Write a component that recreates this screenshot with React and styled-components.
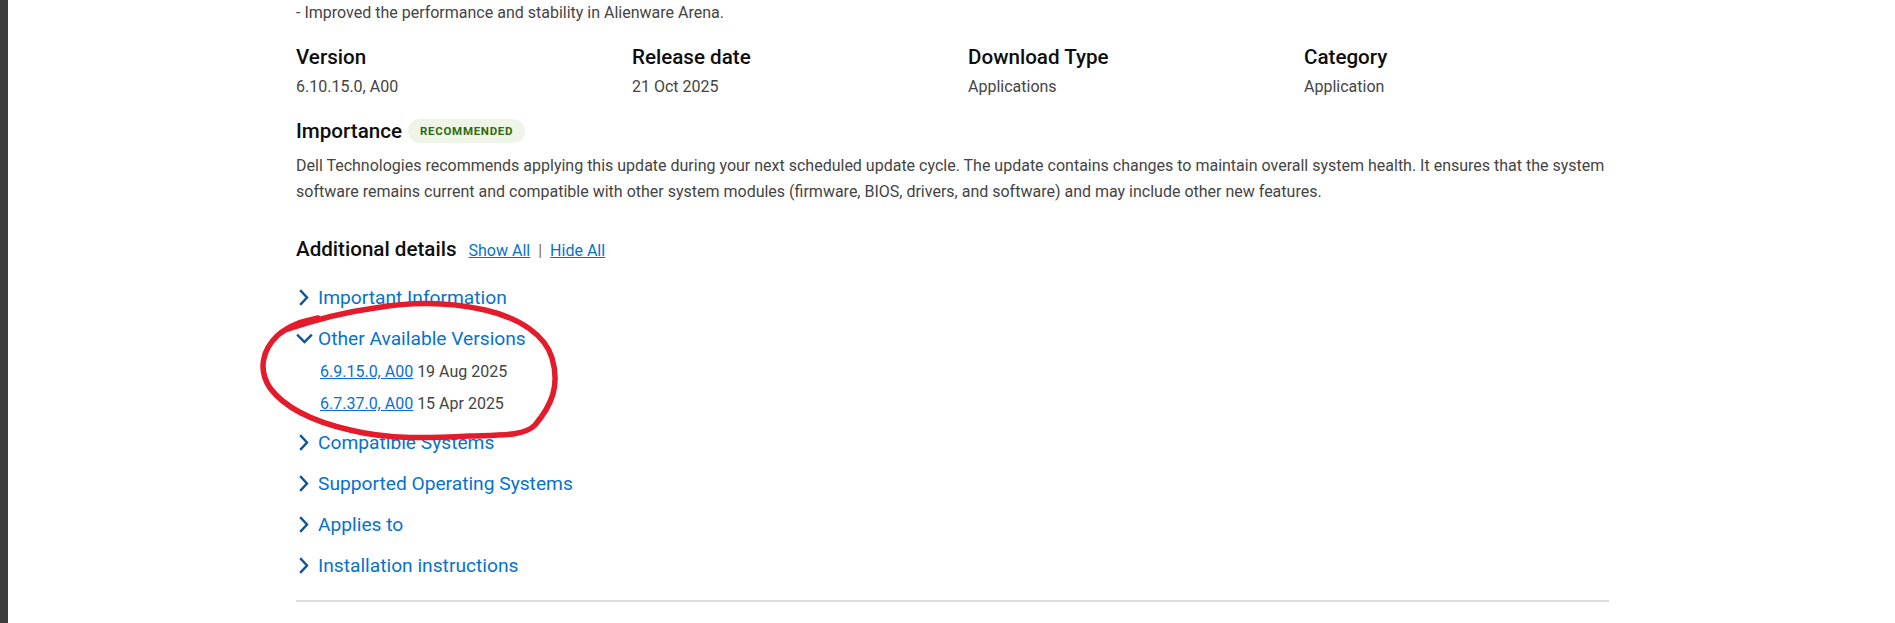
import React from "react";
import styled, { createGlobalStyle } from "styled-components";

const GlobalStyle = createGlobalStyle`
  html, body { margin: 0; padding: 0; background: #ffffff; }
  body { font-family: Roboto, "Noto Sans", "Liberation Sans", sans-serif; color: #444444; }
  * { box-sizing: border-box; }
`;

const Page = styled.div`
  display: flex;
  min-height: 100vh;
  position: relative;
  overflow: hidden;
`;

const SideBar = styled.div`
  width: 8px;
  flex: 0 0 8px;
  background: #3c3c3c;
`;

const Content = styled.main`
  margin-left: 288px;
  width: 1313px;
  padding-top: 1px;
`;

const Note = styled.p`
  margin: 0;
  font-size: 16px;
  line-height: 24px;
  color: #444444;
`;

const InfoGrid = styled.div`
  display: grid;
  grid-template-columns: repeat(4, 1fr);
  column-gap: 31px;
  margin-top: 18px;
`;

const InfoItem = styled.div`
  display: flex;
  flex-direction: column;
  gap: 4px;
`;

const Heading = styled.h3`
  margin: 0;
  font-size: 20.6px;
  line-height: 28px;
  font-weight: 500;
  color: #0e0e0e;
`;

const Value = styled.span`
  font-size: 16px;
  line-height: 24px;
  color: #444444;
`;

const ImportanceRow = styled.div`
  display: flex;
  align-items: center;
  gap: 6px;
  margin-top: 18px;
`;

const Badge = styled.span`
  display: inline-flex;
  align-items: center;
  height: 24px;
  padding: 0 12px;
  border-radius: 12px;
  background: #eef4e7;
  color: #2f6a14;
  font-size: 11.5px;
  font-weight: 700;
  letter-spacing: 0.7px;
  text-transform: uppercase;
`;

const Description = styled.p`
  margin: 8px 0 0;
  font-size: 16px;
  line-height: 26px;
  color: #444444;
`;

const DetailsHeader = styled.div`
  display: flex;
  align-items: baseline;
  margin-top: 30px;
`;

const DetailsTitle = styled.h3`
  margin: 0 12px 0 0;
  font-size: 20.6px;
  line-height: 28px;
  font-weight: 500;
  color: #0e0e0e;
`;

const TextLink = styled.a`
  font-size: 16px;
  color: #0672cb;
  text-decoration: underline;
  cursor: pointer;
`;

const Sep = styled.span`
  font-size: 16px;
  color: #8a6d4a;
  margin: 0 8px;
`;

const Accordion = styled.div`
  margin-top: 13.5px;
  display: flex;
  flex-direction: column;
`;

const AccordionRow = styled.button`
  display: flex;
  align-items: center;
  gap: 3px;
  padding: 8px 0;
  border: 0;
  background: none;
  font-family: inherit;
  font-size: 19.2px;
  line-height: 25px;
  color: #0672cb;
  cursor: pointer;
  text-align: left;
`;

const ChevronWrap = styled.span`
  display: inline-flex;
  width: 19px;
  height: 20px;
  align-items: center;
  justify-content: flex-start;
  color: #0b559d;
`;

const Panel = styled.div`
  display: flex;
  flex-direction: column;
  gap: 7.5px;
  padding: 1.5px 0 6px 24px;
`;

const VersionLine = styled.div`
  font-size: 16px;
  line-height: 24px;
  color: #444444;
`;

const Divider = styled.hr`
  margin: 14.5px 0 0;
  border: 0;
  border-top: 2px solid #dcdcdc;
`;

const Annotation = styled.svg`
  position: absolute;
  left: 0;
  top: 0;
  pointer-events: none;
`;

const Chevron = ({ open }) => (
  <ChevronWrap>
    <svg width="17" height="17" viewBox="0 0 17 17" fill="none">
      {open ? (
        <path d="M2 5.5 L8.5 12 L15 5.5" stroke="currentColor" strokeWidth="2.4" strokeLinecap="square" strokeLinejoin="miter" />
      ) : (
        <path d="M5 2 L11 8.5 L5 15" stroke="currentColor" strokeWidth="2.4" strokeLinecap="square" strokeLinejoin="miter" />
      )}
    </svg>
  </ChevronWrap>
);

const info = [
  { label: "Version", value: "6.10.15.0, A00" },
  { label: "Release date", value: "21 Oct 2025" },
  { label: "Download Type", value: "Applications" },
  { label: "Category", value: "Application" },
];

const sections = [
  { title: "Important Information" },
  {
    title: "Other Available Versions",
    open: true,
    versions: [
      { v: "6.9.15.0, A00", d: "19 Aug 2025" },
      { v: "6.7.37.0, A00", d: "15 Apr 2025" },
    ],
  },
  { title: "Compatible Systems" },
  { title: "Supported Operating Systems" },
  { title: "Applies to" },
  { title: "Installation instructions" },
];

export default function App() {
  return (
    <Page>
      <GlobalStyle />
      <SideBar />
      <Content>
        <Note>- Improved the performance and stability in Alienware Arena.</Note>
        <InfoGrid>
          {info.map((i) => (
            <InfoItem key={i.label}>
              <Heading>{i.label}</Heading>
              <Value>{i.value}</Value>
            </InfoItem>
          ))}
        </InfoGrid>
        <ImportanceRow>
          <Heading>Importance</Heading>
          <Badge>Recommended</Badge>
        </ImportanceRow>
        <Description>
          Dell Technologies recommends applying this update during your next scheduled update cycle. The update contains changes to maintain overall system health. It ensures that the system software remains current and compatible with other system modules (firmware, BIOS, drivers, and software) and may include other new features.
        </Description>
        <DetailsHeader>
          <DetailsTitle>Additional details</DetailsTitle>
          <TextLink>Show All</TextLink>
          <Sep>|</Sep>
          <TextLink>Hide All</TextLink>
        </DetailsHeader>
        <Accordion>
          {sections.map((s) => (
            <React.Fragment key={s.title}>
              <AccordionRow>
                <Chevron open={s.open} />
                {s.title}
              </AccordionRow>
              {s.open && (
                <Panel>
                  {s.versions.map((v) => (
                    <VersionLine key={v.v}>
                      <TextLink>{v.v}</TextLink> {v.d}
                    </VersionLine>
                  ))}
                </Panel>
              )}
            </React.Fragment>
          ))}
        </Accordion>
        <Divider />
      </Content>
      <Annotation width="1895" height="623" viewBox="0 0 1895 623">
        <path
          d="M285 330 C 320 318, 345 312, 375 308 C 410 302, 450 302, 485 310 C 520 318, 545 335, 552 358 C 560 385, 552 405, 535 425 C 525 436, 500 435, 470 436 C 430 438, 390 440, 350 430 C 315 422, 285 408, 270 388 C 258 370, 262 350, 278 335 C 290 325, 300 322, 318 318"
          fill="none"
          stroke="#e31b2b"
          strokeWidth="5.5"
          strokeLinecap="round"
          strokeLinejoin="round"
        />
      </Annotation>
    </Page>
  );
}
